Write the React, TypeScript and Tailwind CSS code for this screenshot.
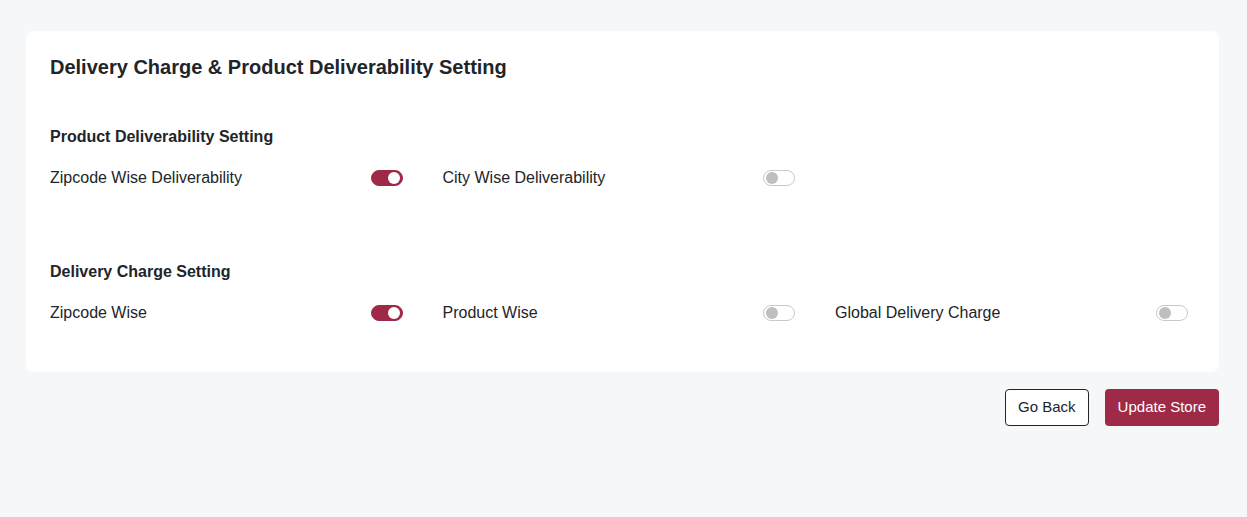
import { useState } from "react"

type ToggleProps = { checked: boolean; onChange: () => void }

function Toggle({ checked, onChange }: ToggleProps) {
  return (
    <button
      type="button"
      role="switch"
      aria-checked={checked}
      onClick={onChange}
      className={
        checked
          ? "relative h-4 w-8 shrink-0 rounded-full border border-[#9e2a47] bg-[#9e2a47]"
          : "relative h-4 w-8 shrink-0 rounded-full border border-[#c9c9c9] bg-white"
      }
    >
      <span
        className={
          checked
            ? "absolute top-1/2 right-[2px] size-[12px] -translate-y-1/2 rounded-full bg-white"
            : "absolute top-1/2 left-[2px] size-[12px] -translate-y-1/2 rounded-full bg-[#bfbfbf]"
        }
      />
    </button>
  )
}

type Item = { key: string; label: string }

function SettingRow({
  items,
  values,
  onToggle,
}: {
  items: Item[]
  values: Record<string, boolean>
  onToggle: (key: string) => void
}) {
  return (
    <div className="grid grid-cols-[352.5px_352.5px_352.5px] gap-x-10">
      {items.map((item) => (
        <div key={item.key} className="flex items-center justify-between">
          <span className="text-base leading-6">{item.label}</span>
          <Toggle checked={values[item.key]} onChange={() => onToggle(item.key)} />
        </div>
      ))}
    </div>
  )
}

export default function App() {
  const [values, setValues] = useState<Record<string, boolean>>({
    zipDeliver: true,
    cityDeliver: false,
    zipCharge: true,
    productCharge: false,
    globalCharge: false,
  })

  function toggle(key: string) {
    setValues((current) => ({ ...current, [key]: !current[key] }))
  }

  return (
    <div className="min-h-screen bg-[#f6f7f9] pt-[31px] pr-[28px] pl-[26px] font-['Liberation_Sans',Arial,sans-serif] text-[#212529]">
      <div className="rounded-lg bg-white px-6 pt-6 pb-[47px]">
        <h1 className="text-[20px] leading-6 font-bold">Delivery Charge &amp; Product Deliverability Setting</h1>

        <h2 className="mt-[46px] text-[16px] leading-6 font-bold">Product Deliverability Setting</h2>
        <div className="mt-[17px]">
          <SettingRow
            items={[
              { key: "zipDeliver", label: "Zipcode Wise Deliverability" },
              { key: "cityDeliver", label: "City Wise Deliverability" },
            ]}
            values={values}
            onToggle={toggle}
          />
        </div>

        <h2 className="mt-[70px] text-[16px] leading-6 font-bold">Delivery Charge Setting</h2>
        <div className="mt-[17px]">
          <SettingRow
            items={[
              { key: "zipCharge", label: "Zipcode Wise" },
              { key: "productCharge", label: "Product Wise" },
              { key: "globalCharge", label: "Global Delivery Charge" },
            ]}
            values={values}
            onToggle={toggle}
          />
        </div>
      </div>

      <div className="mt-[17px] flex justify-end gap-4">
        <button
          type="button"
          className="h-[37px] rounded border border-[#212529] bg-white px-3 text-[15px] text-[#212529]"
        >
          Go Back
        </button>
        <button type="button" className="h-[37px] rounded bg-[#9e2a47] px-[13px] text-[15px] text-white">
          Update Store
        </button>
      </div>
    </div>
  )
}
